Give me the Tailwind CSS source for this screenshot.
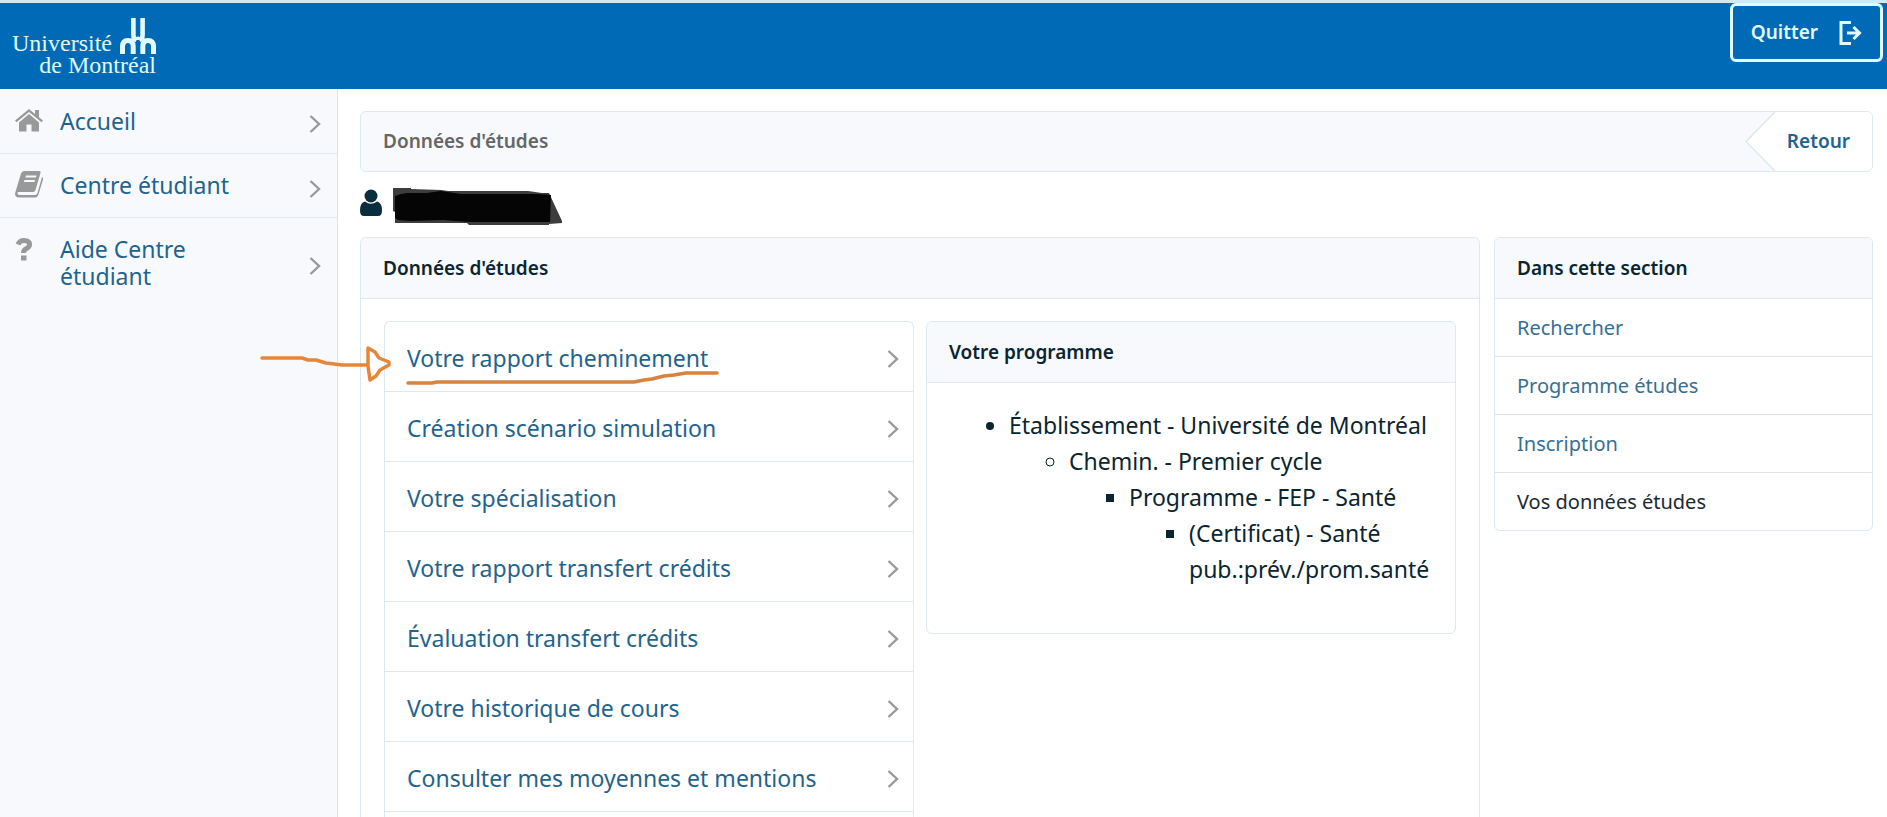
<!DOCTYPE html>
<html lang="fr">
<head>
<meta charset="utf-8">
<meta name="viewport" content="width=device-width, initial-scale=1">
<title>Centre étudiant - Données d'études</title>
<script src="https://cdn.jsdelivr.net/npm/@tailwindcss/browser@4"></script>
</head>
<body class="flex min-h-screen flex-col bg-white font-['Noto_Sans','Liberation_Sans',sans-serif] text-[23px] text-[#0a2530]">
<svg class="hidden" aria-hidden="true">
  <symbol id="chevron" viewBox="0 0 12 18"><path d="M1.500 1 10 9l-8.500 8" fill="none" stroke="#999" stroke-width="2.400"/></symbol>
</svg>

<header class="flex h-[89px] shrink-0 items-start justify-between border-t-3 border-[#cfeaf5] bg-[#006ab6] pr-1">
  <a href="#" class="flex flex-col items-end pt-[15px] pl-3 font-['Liberation_Serif',serif] text-[24px] leading-[22px] text-[#e2fbff]" aria-label="Université de Montréal">
    <span class="flex items-end gap-2">
      <span>Université</span>
      <svg class="h-9 w-9" viewBox="0 0 36 36" fill="none" stroke="#e2fbff">
        <path stroke-width="4.600" d="M13.400 0v17q0 4 3 5M22.600 0v17q0 4-3 5"/>
        <path stroke-width="5" d="M2.500 36v-7.500q0-6 5.500-6 5.200 0 5.200 6V36M33.500 36v-7.500q0-6-5.500-6-5.200 0-5.200 6V36"/>
        <path stroke-width="3" d="M9 22.500q5 0 9-2.500 4 2.500 9 2.500"/>
      </svg>
    </span>
    <span>de Montréal</span>
  </a>
  <button type="button" class="flex h-[59px] items-center gap-5 rounded-md border-3 border-[#e2fbff] px-[18px] text-[19px] font-semibold text-[#e2fbff]">
    Quitter
    <svg class="h-6 w-6" viewBox="0 0 24 24" fill="none" stroke="#e2fbff" stroke-width="3"><path d="M13 1.500H3v21h10M9 12h12M15.500 6l6 6-6 6"/></svg>
  </button>
</header>

<div class="flex grow">
  <nav class="w-[338px] shrink-0 border-r border-[#d7e7ef] bg-[#f7f9fd] leading-[27px] text-[#1f648e]">
    <a href="#" class="flex h-[65px] items-center border-b border-[#d7ebf3] pr-4 pl-[15px]">
      <svg class="h-7 w-7 shrink-0" viewBox="0 0 28 28" fill="#999"><path d="M14 7 4 15.500V24.500h7.500v-7h5v7H24v-9zM14 2 0 13.500l1.500 1.800L14 5l12.500 10.300 1.500-1.800-4-3.300V3h-4v4z"/></svg>
      <span class="ml-[17px] grow">Accueil</span>
      <svg class="mt-1.5 h-[18px] w-3 shrink-0"><use href="#chevron"/></svg>
    </a>
    <a href="#" class="flex h-16 items-center border-b border-[#d7ebf3] pr-4 pl-[15px]">
      <svg class="mb-1 h-7 w-7 shrink-0" viewBox="0 0 28 28"><path fill="#999" fill-rule="evenodd" d="M9 1h15q2 0 1.500 2l-5 17q-.5 2-2.500 2H4q-2 0-1.500 1.500T5 25h15q2 0 2.500-2l4.500-16q1.500 1 1 2.500l-4.500 15Q22.500 27.500 20 27.500H4q-4 0-4-4L6 3.500Q7 1 9 1m2 4.500-.6 2h10.500l.6-2zm-1.500 4.500-.6 2h10.500l.6-2z"/></svg>
      <span class="ml-[17px] grow">Centre étudiant</span>
      <svg class="mt-1.5 h-[18px] w-3 shrink-0"><use href="#chevron"/></svg>
    </a>
    <a href="#" class="flex items-center pt-[18px] pr-4 pl-[15px]">
      <svg class="h-7 w-7 shrink-0 self-start" viewBox="0 0 28 28" fill="none" stroke="#999" stroke-width="5"><path d="M3 8.500Q4.500 4.500 9 4.500q5.500 0 5.500 4 0 2.500-3 4t-3 4.500M6 22h5.500"/></svg>
      <span class="ml-[17px] grow pr-24">Aide Centre étudiant</span>
      <svg class="mt-1.5 h-[18px] w-3 shrink-0"><use href="#chevron"/></svg>
    </a>
  </nav>

  <main class="flex min-w-0 grow flex-col pt-[22px] pr-3.5 pl-[22px]">
    <div class="flex h-[61px] items-stretch justify-between overflow-hidden rounded-md border border-[#dbe9f1] bg-[#f7f9fd] text-[19px] font-semibold">
      <h1 class="self-center pl-[22px] text-[#666]">Données d'études</h1>
      <a href="#" class="flex text-[#1f648e]">
        <svg class="h-full w-[30px]" viewBox="0 0 30 59" preserveAspectRatio="none"><path d="M30 0 1 29.500 30 59" fill="#fff" stroke="#dbe9f1" stroke-width="1.500"/></svg>
        <span class="flex items-center bg-white pr-[22px] pl-3">Retour</span>
      </a>
    </div>

    <div class="flex h-[65px] items-center gap-2">
      <svg class="mb-1 h-[27px] w-[22px]" viewBox="0 0 22 27" fill="#0a2e3e"><circle cx="11" cy="7" r="6.500"/><path d="M5 12.500q6 4.500 12 0 5 1 5 9Q22 27 18 27H4q-4 0-4-5.500 0-8 5-9"/></svg>
      <svg class="mt-0.5 h-[38px] w-[172px]" viewBox="0 0 172 38" role="img" aria-label="Nom masqué"><path fill="#3d3d3d" d="M3 1h18v1l30 1 7 1h80l14 2h7l13 28v2l-13 1v1H79l-2-2H5V25l-2-1z"/><path fill="#050505" d="M5 9l6-2 6-1h20l14-2 20 3h76l14 1-1 27H80l-14-1-13-1-33 1-12-1-3-2z"/></svg>
    </div>

    <div class="flex grow items-stretch gap-3.5">
      <section class="flex min-w-0 grow flex-col rounded-t-md border-x border-t border-[#dbe9f1]">
        <h2 class="flex h-[61px] shrink-0 items-center rounded-t-md border-b border-[#dbe9f1] bg-[#f7f9fd] pl-[22px] text-[19px] font-semibold">Données d'études</h2>
        <div class="grid grow grid-cols-2 gap-3 px-[23px] pt-[22px]">
          <ul class="rounded-t-md border-x border-t border-[#dbe9f1] text-[#1f648e]">
            <li class="relative border-b border-[#dbe9f1]">
              <a href="#" class="flex h-[69px] items-center justify-between pr-[14px] pl-[22px] pt-1">Votre rapport cheminement <svg class="h-[18px] w-3"><use href="#chevron"/></svg></a>
              <svg class="pointer-events-none absolute -top-1 -left-[125px] h-[72px] w-[460px]" viewBox="0 0 460 72" fill="none" stroke="#e5873a" stroke-width="3.500" stroke-linecap="round" stroke-linejoin="round" aria-hidden="true">
                <path d="M2 40h40l6 2h8l10 3 16 2h25M108 30v18l2 14 6-4 4-6 9-5v-3l-10-4-4-6z"/>
                <path stroke="#d8833f" d="M148 65h24l5-1h197l10-2 8-1 12-3 10-1 12-2h31"/>
              </svg>
            </li>
            <li class="border-b border-[#dbe9f1]"><a href="#" class="flex h-[69px] items-center justify-between pr-[14px] pl-[22px] pt-1">Création scénario simulation <svg class="h-[18px] w-3"><use href="#chevron"/></svg></a></li>
            <li class="border-b border-[#dbe9f1]"><a href="#" class="flex h-[69px] items-center justify-between pr-[14px] pl-[22px] pt-1">Votre spécialisation <svg class="h-[18px] w-3"><use href="#chevron"/></svg></a></li>
            <li class="border-b border-[#dbe9f1]"><a href="#" class="flex h-[69px] items-center justify-between pr-[14px] pl-[22px] pt-1">Votre rapport transfert crédits <svg class="h-[18px] w-3"><use href="#chevron"/></svg></a></li>
            <li class="border-b border-[#dbe9f1]"><a href="#" class="flex h-[69px] items-center justify-between pr-[14px] pl-[22px] pt-1">Évaluation transfert crédits <svg class="h-[18px] w-3"><use href="#chevron"/></svg></a></li>
            <li class="border-b border-[#dbe9f1]"><a href="#" class="flex h-[69px] items-center justify-between pr-[14px] pl-[22px] pt-1">Votre historique de cours <svg class="h-[18px] w-3"><use href="#chevron"/></svg></a></li>
            <li class="border-b border-[#dbe9f1]"><a href="#" class="flex h-[69px] items-center justify-between pr-[14px] pl-[22px] pt-1">Consulter mes moyennes et mentions <svg class="h-[18px] w-3"><use href="#chevron"/></svg></a></li>
          </ul>
          <section class="self-start rounded-md border border-[#dbe9f1]">
            <h3 class="flex h-[61px] items-center rounded-t-md border-b border-[#dbe9f1] bg-[#f7f9fd] pl-[22px] text-[19px] font-semibold">Votre programme</h3>
            <ul class="list-disc pt-6 pr-[22px] pb-[46px] pl-[82px] leading-9">
              <li>Établissement - Université de Montréal
                <ul class="list-[circle] pl-[60px]">
                  <li>Chemin. - Premier cycle
                    <ul class="list-[square] pl-[60px]">
                      <li>Programme - FEP - Santé
                        <ul class="list-[square] pl-[60px]">
                          <li>(Certificat) - Santé pub.:prév./prom.santé</li>
                        </ul>
                      </li>
                    </ul>
                  </li>
                </ul>
              </li>
            </ul>
          </section>
        </div>
      </section>

      <aside class="w-[379px] shrink-0 self-start rounded-md border border-[#dbe9f1] text-xl">
        <h2 class="flex h-[61px] items-center rounded-t-md border-b border-[#dbe9f1] bg-[#f7f9fd] pl-[22px] text-[19px] font-semibold">Dans cette section</h2>
        <ul class="divide-y divide-[#dde3e8] text-[#376f94]">
          <li><a href="#" class="flex h-[57px] items-center pl-[22px]">Rechercher</a></li>
          <li><a href="#" class="flex h-[57px] items-center pl-[22px]">Programme études</a></li>
          <li><a href="#" class="flex h-[57px] items-center pl-[22px]">Inscription</a></li>
          <li class="flex h-[57px] items-center pl-[22px] text-[#1a2a33]" aria-current="page">Vos données études</li>
        </ul>
      </aside>
    </div>
  </main>
</div>
</body>
</html>
